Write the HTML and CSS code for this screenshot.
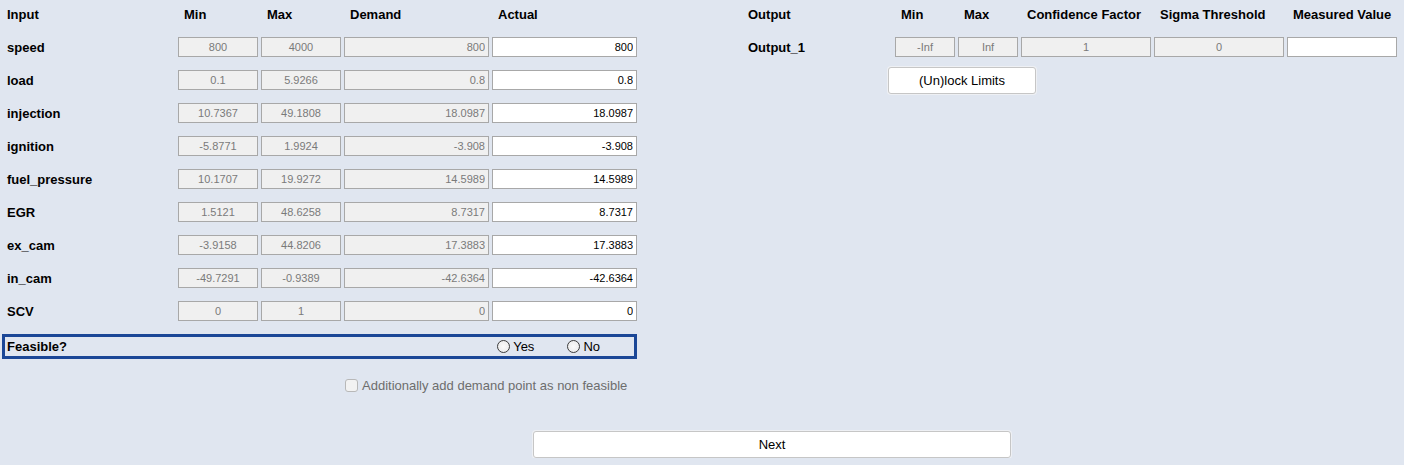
FILE: index.html
```html
<!DOCTYPE html>
<html>
<head>
<meta charset="utf-8">
<link rel="stylesheet" href="styles.css">
</head>
<body>
<div class="page">
  <div class="top">
    <section class="inputs">
      <div class="grid grid-in">
        <div class="hd lbl">Input</div>
        <div class="hd">Min</div>
        <div class="hd">Max</div>
        <div class="hd">Demand</div>
        <div class="hd">Actual</div>

        <div class="lbl">speed</div>
        <input class="box dis c" value="800" disabled>
        <input class="box dis c" value="4000" disabled>
        <input class="box dis r" value="800" disabled>
        <input class="box act r" value="800">

        <div class="lbl">load</div>
        <input class="box dis c" value="0.1" disabled>
        <input class="box dis c" value="5.9266" disabled>
        <input class="box dis r" value="0.8" disabled>
        <input class="box act r" value="0.8">

        <div class="lbl">injection</div>
        <input class="box dis c" value="10.7367" disabled>
        <input class="box dis c" value="49.1808" disabled>
        <input class="box dis r" value="18.0987" disabled>
        <input class="box act r" value="18.0987">

        <div class="lbl">ignition</div>
        <input class="box dis c" value="-5.8771" disabled>
        <input class="box dis c" value="1.9924" disabled>
        <input class="box dis r" value="-3.908" disabled>
        <input class="box act r" value="-3.908">

        <div class="lbl">fuel_pressure</div>
        <input class="box dis c" value="10.1707" disabled>
        <input class="box dis c" value="19.9272" disabled>
        <input class="box dis r" value="14.5989" disabled>
        <input class="box act r" value="14.5989">

        <div class="lbl">EGR</div>
        <input class="box dis c" value="1.5121" disabled>
        <input class="box dis c" value="48.6258" disabled>
        <input class="box dis r" value="8.7317" disabled>
        <input class="box act r" value="8.7317">

        <div class="lbl">ex_cam</div>
        <input class="box dis c" value="-3.9158" disabled>
        <input class="box dis c" value="44.8206" disabled>
        <input class="box dis r" value="17.3883" disabled>
        <input class="box act r" value="17.3883">

        <div class="lbl">in_cam</div>
        <input class="box dis c" value="-49.7291" disabled>
        <input class="box dis c" value="-0.9389" disabled>
        <input class="box dis r" value="-42.6364" disabled>
        <input class="box act r" value="-42.6364">

        <div class="lbl">SCV</div>
        <input class="box dis c" value="0" disabled>
        <input class="box dis c" value="1" disabled>
        <input class="box dis r" value="0" disabled>
        <input class="box act r" value="0">
      </div>

      <div class="feasible">
        <span class="feas-lbl">Feasible?</span>
        <span class="radios">
          <span class="radio"><span class="dot"></span>Yes</span>
          <span class="radio"><span class="dot"></span>No</span>
        </span>
      </div>

      <div class="check-row">
        <span class="check"></span>
        <span class="check-text">Additionally add demand point as non feasible</span>
      </div>
    </section>

    <section class="outputs">
      <div class="grid grid-out">
        <div class="hd lbl">Output</div>
        <div class="hd">Min</div>
        <div class="hd">Max</div>
        <div class="hd">Confidence Factor</div>
        <div class="hd">Sigma Threshold</div>
        <div class="hd">Measured Value</div>

        <div class="lbl">Output_1</div>
        <input class="box dis c" value="-Inf" disabled>
        <input class="box dis c" value="Inf" disabled>
        <input class="box dis c" value="1" disabled>
        <input class="box dis c" value="0" disabled>
        <input class="box act r" value="">
      </div>
      <button class="btn unlock">(Un)lock Limits</button>
    </section>
  </div>

  <div class="footer">
    <button class="btn next">Next</button>
  </div>
</div>
</body>
</html>
```

FILE: styles.css
```css
html, body {
  margin: 0;
  padding: 0;
  background: #e0e6f0;
}

body {
  font-family: "Liberation Sans", Arial, sans-serif;
  font-size: 13px;
  color: #000;
}

.page {
  padding: 4px 0 0 2px;
}

.top {
  display: flex;
  align-items: flex-start;
}

.inputs {
  width: 635px;
}

.outputs {
  margin-left: 106px;
}

.grid {
  display: grid;
  grid-auto-rows: 20px;
  column-gap: 3px;
  row-gap: 13px;
  align-items: center;
}

.grid-in {
  grid-template-columns: 173px 80px 80px 145px 145px;
}

.grid-out {
  grid-template-columns: 149px 60px 60px 130px 130px 110px;
}

.hd {
  font-weight: bold;
  padding-left: 6px;
  white-space: nowrap;
}

.lbl {
  font-weight: bold;
  padding-left: 5px;
  white-space: nowrap;
}

.box {
  box-sizing: border-box;
  width: 100%;
  height: 20px;
  margin: 0;
  border: 1px solid #a8a8a8;
  border-radius: 0;
  padding: 0 3px;
  font-family: "Liberation Sans", Arial, sans-serif;
  font-size: 11px;
  outline: none;
}

.dis {
  background: #f0f0f0;
  color: #7a7a7a;
  -webkit-text-fill-color: #7a7a7a;
  opacity: 1;
}

.act {
  background: #fff;
  color: #000;
}

.c { text-align: center; }
.r { text-align: right; }

.feasible {
  box-sizing: border-box;
  height: 25px;
  margin-top: 13px;
  border: 3px solid #1b4797;
  display: flex;
  align-items: center;
  justify-content: space-between;
  padding: 0 0 0 2px;
}

.feas-lbl {
  font-weight: bold;
}

.radios {
  display: flex;
  align-items: center;
  margin-right: 34px;
}

.radio {
  display: flex;
  align-items: center;
  gap: 3px;
  margin-left: 33px;
}

.radio:first-child {
  margin-left: 0;
}

.dot {
  box-sizing: border-box;
  width: 13px;
  height: 13px;
  border-radius: 50%;
  border: 1px solid #3c3c3c;
  background: radial-gradient(circle at 50% 50%, #fbfbfb 0, #e8e8e8 100%);
}

.check-row {
  display: flex;
  align-items: center;
  margin: 19px 0 0 343px;
  gap: 4px;
}

.check {
  box-sizing: border-box;
  width: 13px;
  height: 13px;
  border: 1px solid #b8b8b8;
  border-radius: 3px;
  background: #f2f2f2;
}

.check-text {
  color: #6d6d6d;
}

.btn {
  box-sizing: border-box;
  height: 27px;
  background: #fff;
  border: 1px solid #c6c6c6;
  border-radius: 3px;
  box-shadow: 0 0 0 1px #eef0f4;
  font-family: "Liberation Sans", Arial, sans-serif;
  font-size: 13px;
  color: #000;
  padding: 0;
  cursor: pointer;
}

.unlock {
  display: block;
  width: 148px;
  margin: 10px 0 0 145px;
}

.footer {
  padding: 38px 0 0 531px;
}

.next {
  display: block;
  width: 478px;
}
```
